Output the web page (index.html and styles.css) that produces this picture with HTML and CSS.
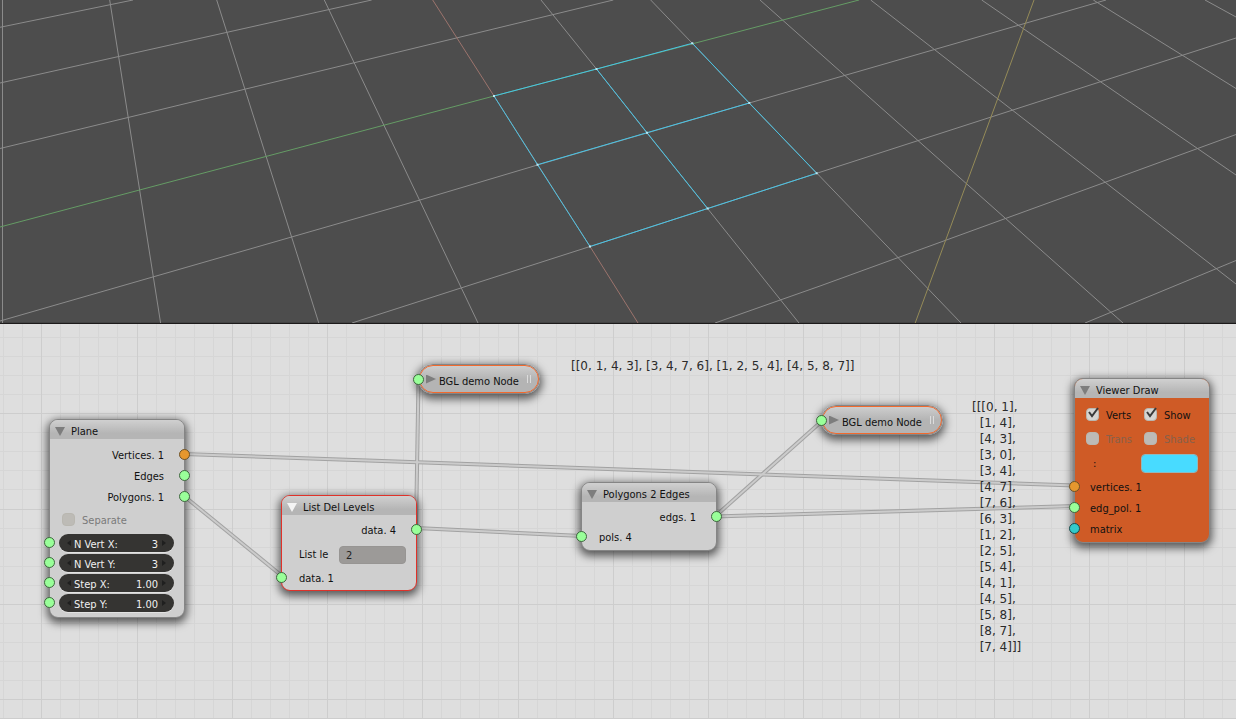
FILE: index.html
```html
<!DOCTYPE html>
<html lang="en">
<head>
<meta charset="utf-8">
<title>Node editor</title>
<link rel="stylesheet" href="styles.css">
</head>
<body>
<main class="app">
  <section class="view3d" aria-label="3D view">
    <svg class="scene" viewBox="0 0 1236 323" preserveAspectRatio="xMinYMin slice">
      <g class="floor">
        <path d="M2.5 0V323"/>
        <path d="M109.7 0L160.6 323M216.7 0L318.8 323M324.3 0L478 323M541 0L596.5 69L647 133L707.7 208.7L799 323M650.7 0L692.3 43.3L749.3 103.3L816.7 173L961 323M760 0L1123 323M870.7 0L1236 284M981.7 0L1236 175M1093.3 0L1236 88.5M1205 0L1236 17"/>
        <path d="M0 27.3L133 0M0 83L371.7 0M0 148.5L613.3 0M0 321L420 200L537.5 165L749.3 103L1106 0M352 323L590 246.5L816.7 173.3L1236 38M715 323L820 286L1105 182.3L1236 134.5M1085 323L1236 260.5"/>
      </g>
      <path class="axis-y" d="M0 227L494 96L859 0"/>
      <path class="axis-x" d="M432.7 0L494 96L590 246.5L638 323"/>
      <path class="lamp" d="M1034 0L915.2 323"/>
      <path class="mesh" d="M494 96L596.5 69L692.3 43.3M537.5 164.7L647 132.7L749.3 103M590 246.5L707.7 208.5L816.7 173.3M494 96L537.5 164.7L590 246.5M596.5 69L647 132.7L707.7 208.5M692.3 43.3L749.3 103L816.7 173.3"/>
      <path class="verts" d="M494 96h0M596.5 69h0M692.3 43.3h0M537.5 164.7h0M647 132.7h0M749.3 103h0M590 246.5h0M707.7 208.5h0M816.7 173.3h0"/>
    </svg>
  </section>

  <section class="canvas" aria-label="Node tree">
    <svg class="wires" width="1236" height="395" viewBox="0 0 1236 395">
      <path class="grid" d="M3.5 0V395M22.5 0V395M60.5 0V395M79.5 0V395M98.5 0V395M117.5 0V395M156.5 0V395M175.5 0V395M194.5 0V395M213.5 0V395M251.5 0V395M270.5 0V395M289.5 0V395M308.5 0V395M346.5 0V395M365.5 0V395M384.5 0V395M403.5 0V395M441.5 0V395M460.5 0V395M479.5 0V395M498.5 0V395M537.5 0V395M556.5 0V395M575.5 0V395M594.5 0V395M632.5 0V395M651.5 0V395M670.5 0V395M689.5 0V395M727.5 0V395M746.5 0V395M765.5 0V395M784.5 0V395M822.5 0V395M841.5 0V395M860.5 0V395M879.5 0V395M918.5 0V395M937.5 0V395M956.5 0V395M975.5 0V395M1013.5 0V395M1032.5 0V395M1051.5 0V395M1070.5 0V395M1108.5 0V395M1127.5 0V395M1146.5 0V395M1165.5 0V395M1203.5 0V395M1222.5 0V395"/>
      <path class="grid" d="M0 13.5H1236M0 32.5H1236M0 51.5H1236M0 70.5H1236M0 108.5H1236M0 127.5H1236M0 146.5H1236M0 165.5H1236M0 204.5H1236M0 223.5H1236M0 242.5H1236M0 261.5H1236M0 299.5H1236M0 318.5H1236M0 337.5H1236M0 356.5H1236"/>
      <path class="grid grid-major" d="M41.5 0V395M137.5 0V395M232.5 0V395M327.5 0V395M422.5 0V395M518.5 0V395M613.5 0V395M708.5 0V395M803.5 0V395M899.5 0V395M994.5 0V395M1089.5 0V395M1184.5 0V395M0 89.5H1236M0 185.5H1236M0 280.5H1236M0 375.5H1236M0 394.5H1236"/>
      <g class="wire">
        <path d="M184 130L1075 161.500"/>
        <path d="M184 172L282 252"/>
        <path d="M416 204L582 212"/>
        <path d="M416 204L418.500 56"/>
        <path d="M715 192.500L822 97"/>
        <path d="M715 192.500L1075 182"/>
      </g>
      <g class="wire wire-core">
        <path d="M184 130L1075 161.500"/>
        <path d="M184 172L282 252"/>
        <path d="M416 204L582 212"/>
        <path d="M416 204L418.500 56"/>
        <path d="M715 192.500L822 97"/>
        <path d="M715 192.500L1075 182"/>
      </g>
    </svg>

    <p class="readout readout-levels">[[0, 1, 4, 3], [3, 4, 7, 6], [1, 2, 5, 4], [4, 5, 8, 7]]</p>
<pre class="readout readout-edges">[[[0, 1],
  [1, 4],
  [4, 3],
  [3, 0],
  [3, 4],
  [4, 7],
  [7, 6],
  [6, 3],
  [1, 2],
  [2, 5],
  [5, 4],
  [4, 1],
  [4, 5],
  [5, 8],
  [8, 7],
  [7, 4]]]</pre>

    <article class="node node-plane">
      <header class="node-head"><button class="fold" aria-label="Collapse Plane"></button><h2 class="title">Plane</h2></header>
      <div class="node-body">
        <div class="row out">Vertices. 1<i class="socket orange"></i></div>
        <div class="row out">Edges<i class="socket"></i></div>
        <div class="row out">Polygons. 1<i class="socket"></i></div>
        <label class="row check dim"><input class="box" type="checkbox">Separate</label>
        <div class="fields">
          <div class="field"><i class="socket"></i><label class="pill"><span>N Vert X:</span><input class="num" value="3"></label></div>
          <div class="field"><i class="socket"></i><label class="pill"><span>N Vert Y:</span><input class="num" value="3"></label></div>
          <div class="field"><i class="socket"></i><label class="pill"><span>Step X:</span><input class="num" value="1.00"></label></div>
          <div class="field"><i class="socket"></i><label class="pill"><span>Step Y:</span><input class="num" value="1.00"></label></div>
        </div>
      </div>
    </article>

    <article class="node node-list">
      <header class="node-head"><button class="fold light" aria-label="Collapse List Del Levels"></button><h2 class="title">List Del Levels</h2></header>
      <div class="node-body">
        <div class="row out">data. 4<i class="socket"></i></div>
        <label class="row in"><span>List le</span><input class="text" value="2"></label>
        <div class="row in">data. 1<i class="socket"></i></div>
      </div>
    </article>

    <article class="node node-polys">
      <header class="node-head"><button class="fold" aria-label="Collapse Polygons 2 Edges"></button><h2 class="title">Polygons 2 Edges</h2></header>
      <div class="node-body">
        <div class="row out">edgs. 1<i class="socket"></i></div>
        <div class="row in">pols. 4<i class="socket"></i></div>
      </div>
    </article>

    <article class="node capsule capsule-a">
      <i class="socket"></i><button class="fold shut" aria-label="Expand BGL demo Node"></button><h2 class="title">BGL demo Node</h2><i class="grip"></i>
    </article>
    <article class="node capsule capsule-b">
      <i class="socket"></i><button class="fold shut" aria-label="Expand BGL demo Node"></button><h2 class="title">BGL demo Node</h2><i class="grip"></i>
    </article>

    <article class="node node-viewer">
      <header class="node-head"><button class="fold" aria-label="Collapse Viewer Draw"></button><h2 class="title">Viewer Draw</h2></header>
      <div class="node-body">
        <div class="pair">
          <label class="row check"><input class="box" type="checkbox" checked><svg class="tick" viewBox="0 0 14 12"><path d="M3 5L6 9L12 1"/></svg>Verts</label>
          <label class="row check"><input class="box" type="checkbox" checked><svg class="tick" viewBox="0 0 14 12"><path d="M3 5L6 9L12 1"/></svg>Show</label>
          <label class="row check dim"><input class="box" type="checkbox">Trans</label>
          <label class="row check dim"><input class="box" type="checkbox">Shade</label>
        </div>
        <label class="row tint"><span>:</span><input class="swatch" type="color" value="#48dbff"></label>
        <div class="inputs">
          <div class="row in">vertices. 1<i class="socket orange"></i></div>
          <div class="row in">edg_pol. 1<i class="socket"></i></div>
          <div class="row in">matrix<i class="socket teal"></i></div>
        </div>
      </div>
    </article>
  </section>
</main>
</body>
</html>
```
FILE: styles.css
```css
* { box-sizing: border-box; }
body {
  margin: 0;
  font: 11px/20px "DejaVu Sans Condensed", "DejaVu Sans", sans-serif;
  color: #111;
}
.app {
  display: grid;
  grid-template-rows: 324fr 395fr;
  height: 100vh;
  overflow: hidden;
}
.view3d {
  min-height: 0;
  background: #4d4d4d;
  border-bottom: 1px solid #1c1a1a;
  box-shadow: inset 0 -1px #434343;
}
.scene { display: block; width: 100%; height: 100%; }
.scene path { fill: none; }
.floor { stroke: #8b8b8b; }
.axis-y { stroke: #659c65; }
.axis-x { stroke: #9c746d; }
.lamp { stroke: #958b58; }
.mesh { stroke: #47c4e6; stroke-width: 1; }
.verts { stroke: #b9e6f2; stroke-width: 2; stroke-linecap: square; }

.canvas {
  position: relative;
  min-height: 0;
  overflow: hidden;
  background: #dedede;
}
.wires { display: block; }
.wires path { fill: none; }
.grid { stroke: #d6d6d6; }
.grid-major { stroke: #cdcdcd; }
.wire { stroke: #a2a2a2; stroke-width: 4; }
.wire-core { stroke: #cbcbcb; stroke-width: 2; }

.readout {
  position: absolute;
  margin: 0;
  font: 12px/16px "DejaVu Sans", sans-serif;
  color: #2b2b2b;
}
.readout-levels { left: 571px; top: 34px; }
.readout-edges { left: 972px; top: 75px; }

.node {
  position: absolute;
  width: 136px;
  border: 1px solid #858585;
  border-radius: 9px;
  background: #cfcfcf;
  box-shadow: 0 3px 8px 2px rgba(0, 0, 0, 0.6);
}
.node-plane { left: 49px; top: 95px; }
.node-list { left: 281px; top: 171px; border-color: #e0322a; }
.node-polys { left: 581px; top: 158px; }
.node-viewer { left: 1074px; top: 54px; background: #cf5b26; }

.node-head {
  display: flex;
  align-items: center;
  height: 19px;
  padding-left: 5px;
  border-radius: 8px 8px 0 0;
  background: linear-gradient(#d0d0d0, #b5b5b5 70%);
}
.title {
  margin: 5px 0 0 6px;
  font: inherit;
  line-height: 18px;
}
.fold {
  width: 10px;
  height: 9px;
  margin-top: 4px;
  padding: 0;
  border: 0;
  background: #7d7d7d;
  clip-path: polygon(0 0, 100% 0, 50% 100%);
}
.fold.light { background: #f4f4f4; }
.fold.shut { clip-path: polygon(0 0, 100% 50%, 0 100%); }

.node-body { display: flex; flex-direction: column; gap: 1px; padding: 7px 0 5px; }
.node-list .node-body { gap: 4px; padding: 6px 0 1px; }
.node-polys .node-body { gap: 0; padding: 6px 0 2px; }
.node-viewer .node-body { gap: 4px; padding: 8px 0 2px; }

.row {
  position: relative;
  display: flex;
  align-items: center;
  height: 20px;
}
.out { justify-content: flex-end; padding-right: 20px; }
.in { padding-left: 17px; }
.node-viewer .in { padding-left: 15px; }

.socket {
  position: absolute;
  top: 3px;
  width: 11px;
  height: 11px;
  border: 1px solid #3f663f;
  border-radius: 50%;
  background: #99ff99;
}
.orange { border-color: #6e5226; background: #e6972e; }
.teal { border-color: #1d4a4a; background: #33c9c9; }
.out .socket { right: -6px; }
.in .socket { left: -6px; }

.check { gap: 7px; }
.dim { color: #7a7a7a; }
.node-plane .check { margin-top: 2px; padding-left: 12px; }
.box {
  appearance: none;
  width: 13px;
  height: 13px;
  margin: 0 0 3px;
  border: 1px solid #b9b7b0;
  border-radius: 4px;
  background: #d6d5d2;
}
.dim .box { background: #bdbbb6; }
.tick {
  position: absolute;
  left: 0;
  top: 1px;
  width: 14px;
  height: 12px;
}
.tick path { fill: none; stroke: #3a3a3a; stroke-width: 2; }

.fields { display: grid; gap: 2px; margin-top: 2px; padding: 0 10px 0 9px; }
.field { position: relative; }
.field .socket { left: -15px; }
.pill {
  position: relative;
  display: flex;
  align-items: center;
  justify-content: space-between;
  height: 18px;
  padding: 3px 16px 0 15px;
  border-radius: 9px;
  background: #353432;
  box-shadow: 0 1px #e2e2e2;
  color: #f0f0f0;
}
.pill::before,
.pill::after {
  content: "";
  position: absolute;
  top: 6px;
  border: 3px solid transparent;
}
.pill::before { left: 5px; border-right: 4px solid #1f1f1f; }
.pill::after { right: 5px; border-left: 4px solid #1f1f1f; }
.num {
  width: 40px;
  padding: 0;
  border: 0;
  background: none;
  color: inherit;
  font: inherit;
  text-align: right;
}
.text {
  width: 67px;
  height: 18px;
  margin: 0 10px 0 auto;
  padding: 2px 6px 0;
  border: 1px solid #979593;
  border-radius: 4px;
  background: #9c9a98;
  color: #222;
  font: inherit;
}

.pair {
  display: grid;
  grid-template-columns: 58px 58px;
  row-gap: 4px;
  padding-left: 11px;
}
.tint { justify-content: space-between; padding: 0 11px 0 18px; }
.swatch {
  appearance: none;
  width: 57px;
  height: 19px;
  margin: 0 0 2px;
  padding: 0;
  border: 1px solid #8fb9bd;
  border-radius: 4px;
  background: #48dbff;
  overflow: hidden;
}
.swatch::-webkit-color-swatch-wrapper { padding: 0; }
.swatch::-webkit-color-swatch { border: 0; }
.inputs { display: grid; gap: 1px; }
.node-viewer .dim { color: #87604a; }

.capsule {
  display: flex;
  align-items: center;
  width: 122px;
  height: 30px;
  padding-left: 7px;
  border-radius: 15px;
  background: linear-gradient(#cfcfcf, #b4b4b4 50%);
}
.capsule::before {
  content: "";
  position: absolute;
  inset: 0;
  border: 1px solid #f26a2e;
  border-radius: 14px;
}
.capsule .fold,
.capsule .title { position: relative; }
.capsule .fold { margin-top: 0; }
.capsule .title { margin-left: 3px; }
.capsule .socket { left: -6px; top: 9px; z-index: 1; }
.capsule-a { left: 418px; top: 40px; }
.capsule-b { left: 821px; top: 81px; }
.grip {
  width: 4px;
  height: 8px;
  margin: 0 0 0 8px;
  border: 1px solid #dcdcdc;
  border-width: 0 1px;
}
```
